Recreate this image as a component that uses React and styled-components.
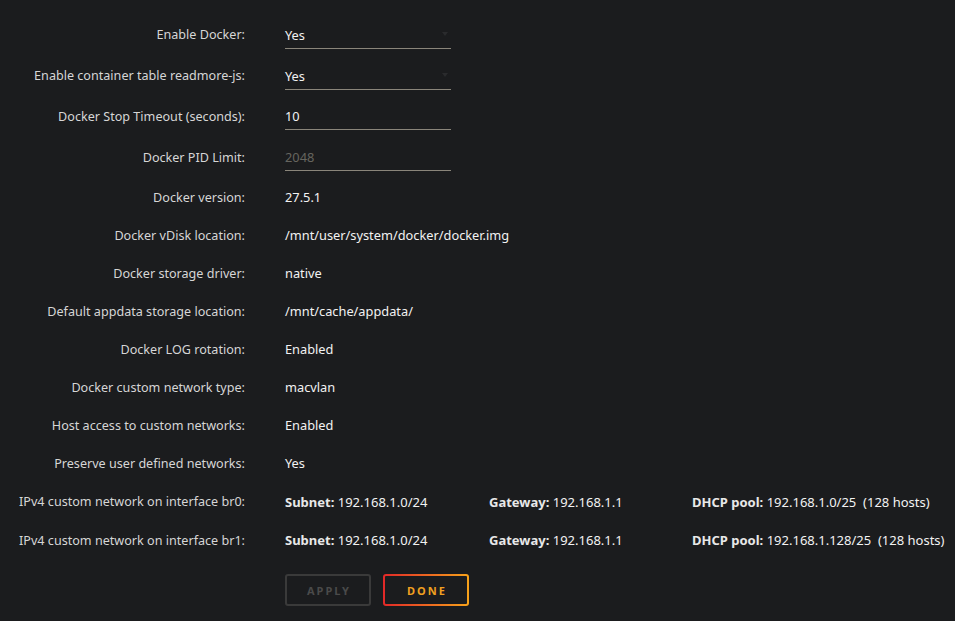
import React from "react";
import styled, { createGlobalStyle } from "styled-components";

const Global = createGlobalStyle`
  html, body { margin: 0; padding: 0; background: #1b1c1e; }
  body { font-family: "Noto Sans", "Open Sans", sans-serif; font-size: 12.8px; color: #f2f2f2; }
`;

const Page = styled.div`
  width: 955px;
  height: 621px;
  background: #1b1c1e;
  padding-top: 14.6px;
  box-sizing: border-box;
  overflow: hidden;
`;

const Section = styled.div`
  padding-top: ${(p) => p.$pad || 0}px;
`;

const Row = styled.div`
  display: grid;
  grid-template-columns: 245px 1fr;
  column-gap: 40px;
  align-items: center;
  height: ${(p) => p.$h}px;
`;

const Label = styled.div`
  text-align: right;
  color: #d6d6d6;
  font-size: 12.6px;
  white-space: nowrap;
`;

const Value = styled.div`
  color: #f2f2f2;
  white-space: nowrap;
`;

const Field = styled.div`
  position: relative;
  width: 166px;
  height: 28px;
  box-sizing: border-box;
  border-bottom: 1px solid #8a857a;
  display: flex;
  align-items: center;
  padding-top: 1px;
  color: ${(p) => (p.$muted ? "#66655f" : "#f2f2f2")};
`;

const Arrow = styled.span`
  position: absolute;
  right: 3px;
  top: 11px;
  width: 0;
  height: 0;
  border-left: 3px solid transparent;
  border-right: 3px solid transparent;
  border-top: 4px solid #2a2b2d;
`;

const Net = styled.div`
  display: grid;
  grid-template-columns: 204px 203px auto;
  white-space: nowrap;
  font-size: 13px;
`;

const B = styled.b`
  font-weight: 700;
  color: #e8e8e8;
`;

const Buttons = styled.div`
  display: flex;
  gap: 12px;
  padding-left: 285px;
  margin-top: 15px;
`;

const Button = styled.button`
  width: 86px;
  height: 32px;
  box-sizing: border-box;
  background: #1b1c1e;
  font-family: "Noto Sans", sans-serif;
  font-weight: 700;
  font-size: 11px;
  letter-spacing: 2px;
  padding: 0 0 0 2px;
  border-radius: 3px;
  ${(p) =>
    p.$primary
      ? `
    color: #f0a020;
    border: 2px solid transparent;
    background: linear-gradient(#1b1c1e, #1b1c1e) padding-box,
      linear-gradient(90deg, #e22828, #f7a21a) border-box;
  `
      : `
    color: #4a4a4a;
    border: 2px solid #3a3a3a;
  `}
`;

const inputs = [
  ["Enable Docker:", "Yes", "select"],
  ["Enable container table readmore-js:", "Yes", "select"],
  ["Docker Stop Timeout (seconds):", "10", "input"],
  ["Docker PID Limit:", "2048", "muted"],
];

const texts = [
  ["Docker version:", "27.5.1"],
  ["Docker vDisk location:", "/mnt/user/system/docker/docker.img"],
  ["Docker storage driver:", "native"],
  ["Default appdata storage location:", "/mnt/cache/appdata/"],
  ["Docker LOG rotation:", "Enabled"],
  ["Docker custom network type:", "macvlan"],
  ["Host access to custom networks:", "Enabled"],
  ["Preserve user defined networks:", "Yes"],
];

const nets = [
  ["br0", "192.168.1.0/24", "192.168.1.1", "192.168.1.0/25"],
  ["br1", "192.168.1.0/24", "192.168.1.1", "192.168.1.128/25"],
];

export default function App() {
  return (
    <Page>
      <Global />
      <Section>
        {inputs.map(([l, v, t]) => (
          <Row key={l} $h={40.7}>
            <Label>{l}</Label>
            <Field $muted={t === "muted"}>
              {v}
              {t === "select" && <Arrow />}
            </Field>
          </Row>
        ))}
      </Section>
      <Section $pad={1}>
        {texts.map(([l, v]) => (
          <Row key={l} $h={38}>
            <Label>{l}</Label>
            <Value>{v}</Value>
          </Row>
        ))}
        {nets.map(([i, s, g, d]) => (
          <Row key={i} $h={38.5}>
            <Label>IPv4 custom network on interface {i}:</Label>
            <Net>
              <span><B>Subnet:</B> {s}</span>
              <span><B>Gateway:</B> {g}</span>
              <span><B>DHCP pool:</B> {d}&nbsp; (128 hosts)</span>
            </Net>
          </Row>
        ))}
      </Section>
      <Buttons>
        <Button>APPLY</Button>
        <Button $primary>DONE</Button>
      </Buttons>
    </Page>
  );
}
